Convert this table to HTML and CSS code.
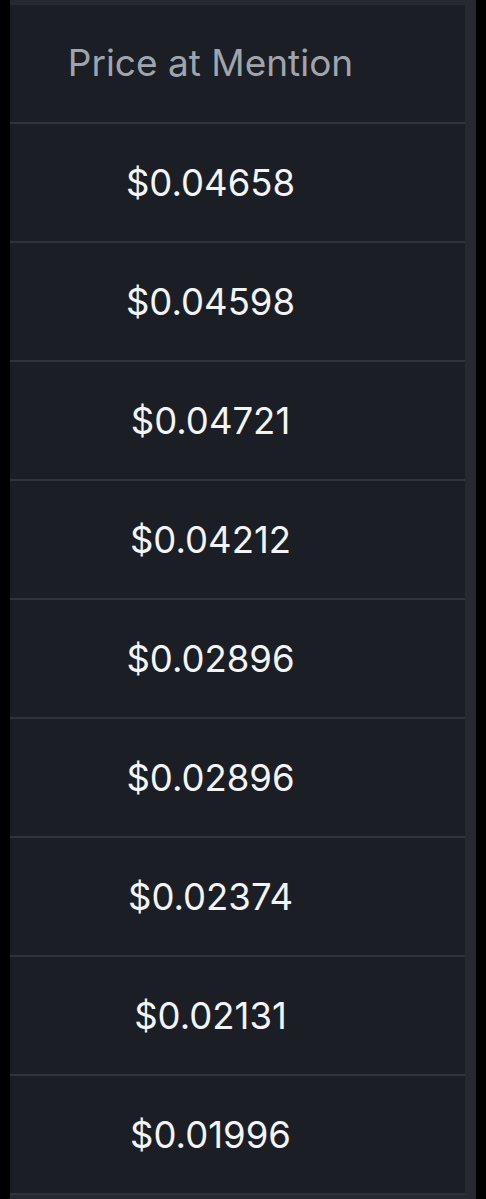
FILE: index.html
```html
<!DOCTYPE html>
<html>
<head>
<meta charset="utf-8">
<link rel="stylesheet" href="styles.css">
</head>
<body>
<div class="frame">
  <div class="table">
    <div class="cell head">Price at Mention</div>
    <div class="cell">$0.04658</div>
    <div class="cell">$0.04598</div>
    <div class="cell">$0.04721</div>
    <div class="cell">$0.04212</div>
    <div class="cell">$0.02896</div>
    <div class="cell">$0.02896</div>
    <div class="cell">$0.02374</div>
    <div class="cell">$0.02131</div>
    <div class="cell">$0.01996</div>
  </div>
</div>
</body>
</html>
```
FILE: styles.css
```css
html, body {
  margin: 0;
  padding: 0;
  background: #000;
  height: 100%;
}
body {
  font-family: Inter, "Noto Sans", sans-serif;
  padding-left: 10px;
  padding-right: 10px;
  overflow: hidden;
}
.frame {
  background: #262a30;
  padding: 5px 11px 0 0;
  min-height: 1199px;
  box-sizing: border-box;
}
.table {
  background: #1b1e24;
  display: flex;
  flex-direction: column;
}
.cell {
  height: 117px;
  border-bottom: 2px solid #2f343b;
  display: flex;
  align-items: center;
  justify-content: center;
  padding-right: 54px;
  color: #f3f4f6;
  font-size: 36.5px;
  font-weight: 400;
}
.head {
  height: 115px;
  padding-bottom: 2px;
  box-sizing: content-box;
  color: #a0a5ad;
  font-size: 37px;
}
```
